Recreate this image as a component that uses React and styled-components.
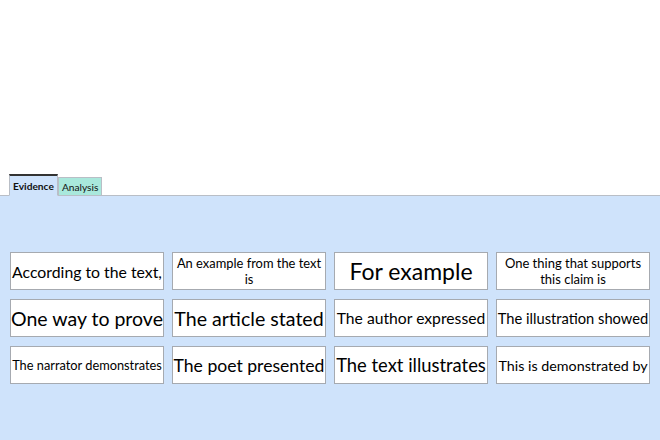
import React from "react";
import styled, { createGlobalStyle } from "styled-components";

const Global = createGlobalStyle`
  html, body { margin: 0; padding: 0; background: #fff; }
  body { font-family: Lato, "Liberation Sans", sans-serif; }
`;

const Page = styled.div`
  width: 660px;
  height: 440px;
  display: flex;
  flex-direction: column;
  padding-top: 174px;
  box-sizing: border-box;
`;

const TabBar = styled.div`
  display: flex;
  align-items: flex-end;
  padding-left: 9px;
  height: 21px;
  border-bottom: 1px solid #b9bec6;
`;

const Tab = styled.div`
  box-sizing: border-box;
  height: ${p => (p.$active ? "22px" : "19px")};
  margin-bottom: -1px;
  padding: 0 3px;
  display: flex;
  align-items: center;
  font-size: 10.2px;
  font-weight: ${p => (p.$active ? 700 : 400)};
  color: #111;
  background: ${p => (p.$active ? "#cfe3fb" : "#a9e8dc")};
  border: 1px solid #b9bec6;
  border-top: ${p => (p.$active ? "2px solid #333" : "1px solid #b9bec6")};
  border-bottom: ${p => (p.$active ? "1px solid #cfe3fb" : "1px solid #b9bec6")};
`;

const Panel = styled.div`
  flex: 1;
  background: #cfe3fb;
  padding: 56px 10px 0 10px;
`;

const Grid = styled.div`
  display: grid;
  grid-template-columns: repeat(4, 154px);
  grid-auto-rows: 38px;
  column-gap: 8px;
  row-gap: 9px;
`;

const Card = styled.div`
  box-sizing: border-box;
  background: #fff;
  border: 1px solid #a6aab0;
  display: flex;
  align-items: center;
  justify-content: center;
  text-align: center;
  color: #000;
  font-size: ${p => p.$size}px;
  line-height: 1.22;
  white-space: ${p => (p.$wrap ? "normal" : "nowrap")};
  overflow: hidden;
  padding: 1px ${p => (p.$wrap ? 2 : 1)}px 0;
`;

const phrases = [
  { text: "According to the text,", size: 15.8 },
  { text: "An example from the text is", size: 12.9, wrap: true },
  { text: "For example", size: 23 },
  { text: "One thing that supports this claim is", size: 13, wrap: true },
  { text: "One way to prove", size: 19.5 },
  { text: "The article stated", size: 19.6 },
  { text: "The author expressed", size: 15.7 },
  { text: "The illustration showed", size: 14.7 },
  { text: "The narrator demonstrates", size: 12.8 },
  { text: "The poet presented", size: 17.6 },
  { text: "The text illustrates", size: 18.4 },
  { text: "This is demonstrated by", size: 14.3 },
];

export default function App() {
  return (
    <>
      <Global />
      <Page>
        <TabBar>
          <Tab $active>Evidence</Tab>
          <Tab>Analysis</Tab>
        </TabBar>
        <Panel>
          <Grid>
            {phrases.map(p => (
              <Card key={p.text} $size={p.size} $wrap={p.wrap}>
                {p.text}
              </Card>
            ))}
          </Grid>
        </Panel>
      </Page>
    </>
  );
}
